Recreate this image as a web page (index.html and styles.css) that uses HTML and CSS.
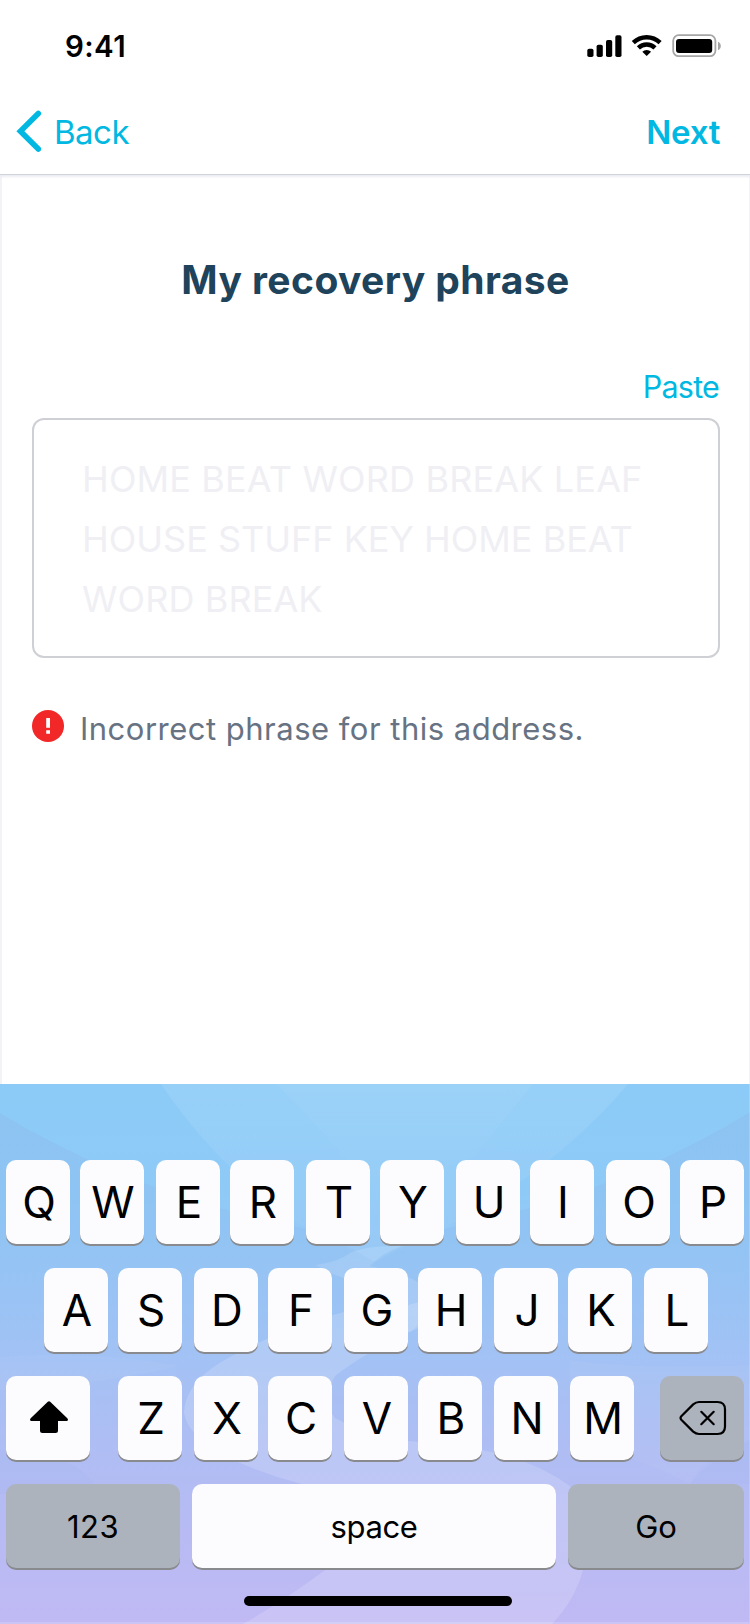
FILE: index.html
```html
<!DOCTYPE html>
<html lang="en">
<head>
<meta charset="utf-8">
<title>My recovery phrase</title>
<link rel="stylesheet" href="styles.css">
</head>
<body>
<div class="screen">
  <header class="status">
    <span class="time">9:41</span>
    <svg class="status-icons" width="136" height="26" viewBox="586 33 136 26">
      <rect x="587.3" y="48.7" width="6.2" height="8.3" rx="1.8"/>
      <rect x="596.6" y="44.7" width="6.2" height="12.3" rx="1.8"/>
      <rect x="606" y="40" width="6.2" height="17" rx="1.8"/>
      <rect x="615.3" y="35.3" width="6.2" height="21.7" rx="1.8"/>
      <g fill="none" stroke="#000" stroke-width="4.4">
        <path d="M633.3 42.6a19.3 19.3 0 0 1 26.8 0"/>
        <path d="M638.4 47.8a12 12 0 0 1 16.6 0"/>
      </g>
      <path d="M646.7 56.1l-4.4-4.3a6.6 6.6 0 0 1 8.8 0z"/>
      <rect x="673.2" y="35.2" width="42.2" height="21" rx="5.5" fill="none" stroke="#a6a6a6" stroke-width="1.8"/>
      <rect x="676" y="39" width="36.2" height="14" rx="3"/>
      <path d="M718 41.8c3.8 1.5 3.8 7 0 8.5z" fill="#a6a6a6"/>
    </svg>
  </header>
  <nav class="nav">
    <a class="back">
      <svg width="26" height="44" viewBox="0 0 26 44"><path d="M22.3 4.4L4.4 22.2l17.9 17.8" fill="none" stroke="#00b8e1" stroke-width="5.6" stroke-linecap="round" stroke-linejoin="miter"/></svg>
      <span class="back-label">Back</span>
    </a>
    <a class="next">Next</a>
  </nav>
  <main class="content">
    <h1 class="title"><span class="title-text">My recovery phrase</span></h1>
    <div class="paste"><span class="paste-label">Paste</span></div>
    <div class="phrase">
      <div class="line line-a">HOME BEAT WORD BREAK LEAF</div>
      <div class="line line-b">HOUSE STUFF KEY HOME BEAT</div>
      <div class="line line-c">WORD BREAK</div>
    </div>
    <div class="error">
      <svg width="32" height="32" viewBox="0 0 32 32"><circle cx="16" cy="16" r="16" fill="#f22727"/><path d="M14.2 8h3.8v9.7h-3.8zM14.2 20.2h3.8v3.6h-3.8z" fill="#fff"/></svg>
      <span class="error-text">Incorrect phrase for this address.</span>
    </div>
  </main>
  <section class="keyboard">
    <svg class="art" width="750" height="540" viewBox="0 1084 750 540">
      <defs>
        <linearGradient id="sky" x1="0" y1="0" x2="0" y2="1">
          <stop offset="0" stop-color="#8ccbf7"/>
          <stop offset=".2" stop-color="#8fcaf7"/>
          <stop offset=".45" stop-color="#9ec3f5"/>
          <stop offset=".6" stop-color="#aabff4"/>
          <stop offset=".8" stop-color="#b6bbf3"/>
          <stop offset="1" stop-color="#c0b9f4"/>
        </linearGradient>
        <linearGradient id="shade" gradientUnits="userSpaceOnUse" x1="0" y1="1112" x2="0" y2="1360">
          <stop offset="0" stop-color="#8cbcec" stop-opacity=".5"/>
          <stop offset=".5" stop-color="#8cbcee" stop-opacity=".35"/>
          <stop offset="1" stop-color="#9cbcf0" stop-opacity="0"/>
        </linearGradient>
        <linearGradient id="ray" gradientUnits="userSpaceOnUse" x1="0" y1="1084" x2="0" y2="1250">
          <stop offset="0" stop-color="#fff" stop-opacity=".09"/>
          <stop offset="1" stop-color="#fff" stop-opacity=".03"/>
        </linearGradient>
        <linearGradient id="ray-inner" gradientUnits="userSpaceOnUse" x1="0" y1="1084" x2="0" y2="1200">
          <stop offset="0" stop-color="#fff" stop-opacity=".05"/>
          <stop offset="1" stop-color="#fff" stop-opacity="0"/>
        </linearGradient>
      </defs>
      <path fill="url(#sky)" d="M0 1084h750v540H0z"/>
      <path fill="url(#shade)" d="M0 1113Q130 1192 290 1225Q335 1236 375 1262Q415 1236 460 1225Q620 1192 750 1112V1360H0z"/>
      <path fill="url(#ray)" d="M161 1084Q215 1165 300 1225L375 1262L450 1225Q560 1165 628 1084z"/>
      <path fill="url(#ray-inner)" d="M277 1084L347 1158L375 1200L475 1155L533 1084z"/>
      <path fill="#fff" fill-opacity=".13" d="M316 1265Q338 1262 350 1253Q365 1246 395 1246H402Q380 1254 370 1266Q400 1272 420 1283Q450 1300 410 1332L344 1300V1278Q330 1274 316 1265z"/>
      <path fill="#fff" fill-opacity=".16" d="M425 1300Q390 1312 344 1312Q290 1325 230 1357Q186 1380 184 1412Q186 1437 238 1462Q270 1476 302 1484L400 1520Q370 1545 325 1570Q285 1600 243 1624H552Q575 1600 583 1570Q600 1520 570 1486Q540 1464 500 1454Q460 1444 408 1441Q370 1437 335 1418Q320 1400 335 1376Q365 1352 425 1325z"/>
      <path fill="#fff" fill-opacity=".04" d="M0 1390Q100 1385 180 1366Q90 1350 0 1357zM570 1360Q640 1370 750 1365V1440Q700 1460 690 1484Q620 1450 570 1440z"/>
      <path fill="#9db0ee" fill-opacity=".12" d="M0 1450Q70 1450 94 1484L0 1494zM750 1440Q710 1460 690 1484H750z"/>
      <path fill="#fff" fill-opacity=".18" d="M0 1622h750v2H0zM749 1084h1v540h-1z"/>
    </svg>
    <div class="keys">
      <div class="row row-1"><span class="key">Q</span><span class="key">W</span><span class="key">E</span><span class="key">R</span><span class="key">T</span><span class="key">Y</span><span class="key">U</span><span class="key">I</span><span class="key">O</span><span class="key">P</span></div>
      <div class="row row-2"><span class="key">A</span><span class="key">S</span><span class="key">D</span><span class="key">F</span><span class="key">G</span><span class="key">H</span><span class="key">J</span><span class="key">K</span><span class="key">L</span></div>
      <div class="row row-3">
        <span class="key shift"><svg width="40" height="36" viewBox="0 0 40 36"><path d="M18.8 1.7Q20 .6 21.2 1.7L38.3 18.3Q40 20.6 37.5 21H29V30.5Q29 33 26.5 33H13.5Q11 33 11 30.5V21H2.5Q0 20.6 1.7 18.3z"/></svg></span><span class="key">Z</span><span class="key">X</span><span class="key">C</span><span class="key">V</span><span class="key">B</span><span class="key">N</span><span class="key last">M</span><span class="key grey delete"><svg width="48" height="36" viewBox="0 0 48 36"><g fill="none" stroke="#000" stroke-width="2.2" stroke-linecap="round" stroke-linejoin="round"><path d="M2.3 16.3L14.2 4.4Q17 2 20 2H38.5Q46 2 46 9.5V26.5Q46 34 38.5 34H20Q17 34 14.2 31.6L2.3 19.7Q.8 18 2.3 16.3z"/><path d="M22.3 11.8l12.4 12.4M34.7 11.8L22.3 24.2"/></g></svg></span>
      </div>
      <div class="row row-4"><span class="key grey wide num">123</span><span class="key wide space">space</span><span class="key grey wide go">Go</span></div>
    </div>
    <div class="home"></div>
  </section>
</div>
</body>
</html>
```
FILE: styles.css
```css
* { box-sizing: border-box; }
body { margin: 0; background: #fff; font-family: Inter, "Liberation Sans", sans-serif; }
.screen { width: 750px; height: 1624px; display: flex; flex-direction: column; overflow: hidden; background: #fff; }

.status { height: 88px; flex: none; display: flex; justify-content: space-between; align-items: flex-start; padding: 33px 28px 0 65px; }
.time { font-size: 29.5px; font-weight: 600; line-height: 26px; letter-spacing: 0.4px; }
.status-icons { display: block; }

.nav { height: 87px; flex: none; display: flex; justify-content: space-between; padding: 21px 30px 0 16px; color: #00b8e1; border-bottom: 1px solid #cfd3dc; box-shadow: 0 2px 2px #ececf3; position: relative; }
.back { display: flex; gap: 12px; }
.back-label, .next { font-size: 33px; line-height: 46px; letter-spacing: -0.5px; }
.next { font-weight: 600; letter-spacing: -0.3px; }

.content { height: 909px; flex: none; padding: 0 30px; border: solid #f2f2f7; border-width: 0 1px 0 2px; }
.title { margin: 0; padding-top: 78px; text-align: center; color: #20435c; font-size: 39px; font-weight: 700; line-height: 54px; letter-spacing: 0.42px; }
.paste { display: flex; justify-content: flex-end; padding-top: 60px; color: #00b8e1; font-size: 30.5px; line-height: 40px; letter-spacing: -0.8px; }
.phrase { height: 240px; margin-top: 11px; width: 688px; border: 2px solid #cfd0d6; border-radius: 12px; padding: 29px 0 0 48px; color: #efeff4; font-size: 36px; line-height: 60px; }
.line { white-space: nowrap; }
.line-a { letter-spacing: 0.15px; }
.line-c { letter-spacing: 0.1px; }
.error { display: flex; gap: 16px; padding-top: 52px; }
.error-text { color: #677383; font-size: 31px; line-height: 38px; white-space: nowrap; letter-spacing: 0.49px; }

.keyboard { height: 540px; flex: none; position: relative; display: flex; flex-direction: column; align-items: center; }
.art { position: absolute; inset: 0; }
.keys { position: relative; width: 750px; padding-top: 76px; display: flex; flex-direction: column; gap: 24px; }
.row { display: flex; height: 84px; padding-left: 6px; }
.row-2 { padding-left: 44px; }
.key { width: 64px; height: 84px; flex: none; display: flex; justify-content: center; padding-left: 2px; background: #fcfcfe; border-radius: 10px; box-shadow: 0 2px 0 #898a8d; color: #000; font-size: 44px; line-height: 84px; }
.key:nth-child(even) { margin-left: 10px; }
.key:nth-child(odd) { margin-left: 12px; }
.key:first-child { margin-left: 0; }
.row-3 .key:nth-child(2) { margin-left: 28px; }
.row-3 .key.last { margin-left: 12px; }
.row-3 .key.delete { margin-left: 26px; }
.grey { background: #acb3bd; }
.shift, .delete { width: 84px; padding: 24px 0 0 1px; }
.row-4 .wide { font-size: 31px; padding-left: 0; line-height: 86px; }
.row-4 .num { width: 174px; letter-spacing: 0.4px; }
.row-4 .space { width: 364px; margin-left: 12px; letter-spacing: -0.4px; }
.row-4 .go { width: 176px; margin-left: 12px; }
.home { position: relative; width: 268px; height: 10px; margin: 28px 0 0 6px; border-radius: 5px; background: #000; }
```
